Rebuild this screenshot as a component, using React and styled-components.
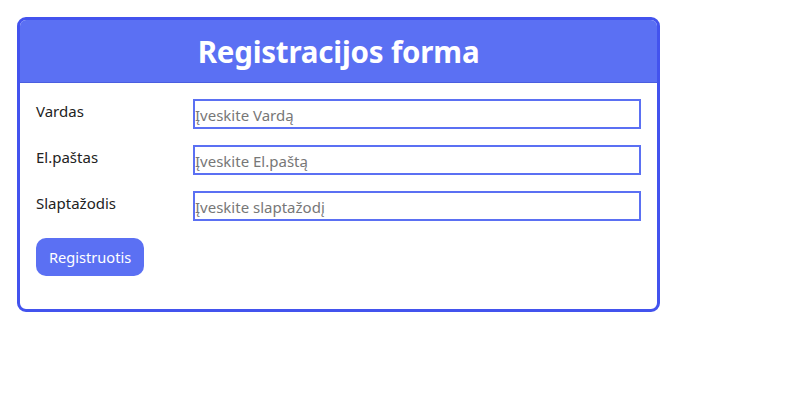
import React from 'react'
import styled, { createGlobalStyle } from 'styled-components'

const GlobalStyle = createGlobalStyle`
  body {
    margin: 0;
    background: #fff;
    font-family: "Noto Sans", "Open Sans", sans-serif;
  }
`

const Page = styled.div`
  padding: 17px 0 0 17px;
`

const Card = styled.form`
  width: 643px;
  box-sizing: border-box;
  border: 3px solid #4353ee;
  border-radius: 9px;
  overflow: hidden;
  background: #fff;
`

const Header = styled.h1`
  margin: 0;
  height: 62px;
  display: flex;
  align-items: center;
  justify-content: center;
  background: #5b70f3;
  border-bottom: 1px solid #4a5ee0;
  color: #fff;
  font-size: 29.5px;
  font-weight: 700;
  letter-spacing: -0.2px;
`

const Body = styled.div`
  padding: 16px 16px 33px 16px;
  display: flex;
  flex-direction: column;
  gap: 16px;
`

const Row = styled.div`
  display: grid;
  grid-template-columns: 157px 1fr;
  align-items: start;
`

const Label = styled.label`
  font-size: 15px;
  color: #222;
  line-height: 20px;
  padding-top: 2px;
`

const Input = styled.input`
  height: 30px;
  box-sizing: border-box;
  border: 2px solid #5b70f3;
  border-radius: 0;
  padding: 2px 0 0 0;
  font-family: inherit;
  font-size: 15px;
  outline: none;

  &::placeholder {
    color: #777;
  }
`

const Button = styled.button`
  align-self: flex-start;
  margin-top: 1px;
  height: 38px;
  padding: 0 13px;
  border: none;
  border-radius: 10px;
  background: #5b70f3;
  color: #fff;
  font-family: inherit;
  font-size: 14.6px;
  cursor: pointer;
`

const fields = [
  { label: 'Vardas', placeholder: 'Įveskite Vardą', type: 'text' },
  { label: 'El.paštas', placeholder: 'Įveskite El.paštą', type: 'email' },
  { label: 'Slaptažodis', placeholder: 'Įveskite slaptažodį', type: 'password' },
]

export default function App () {
  return (
    <Page>
      <GlobalStyle />
      <Card onSubmit={e => e.preventDefault()}>
        <Header>Registracijos forma</Header>
        <Body>
          {fields.map(f => (
            <Row key={f.label}>
              <Label>{f.label}</Label>
              <Input type={f.type} placeholder={f.placeholder} />
            </Row>
          ))}
          <Button type="submit">Registruotis</Button>
        </Body>
      </Card>
    </Page>
  )
}
